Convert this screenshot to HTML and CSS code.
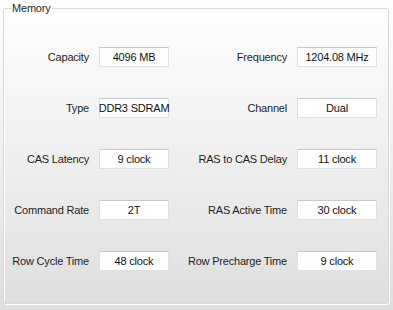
FILE: index.html
```html
<!DOCTYPE html>
<html>
<head>
  <meta charset="UTF-8">
  <title>Memory</title>
  <link rel="stylesheet" href="styles.css">
</head>
<body>
  <fieldset class="group">
    <legend class="group-title">Memory</legend>
    <div class="fields">
      <span class="label">Capacity</span>
      <span class="value">4096 MB</span>
      <span class="label">Frequency</span>
      <span class="value">1204.08 MHz</span>

      <span class="label">Type</span>
      <span class="value">DDR3 SDRAM</span>
      <span class="label">Channel</span>
      <span class="value">Dual</span>

      <span class="label">CAS Latency</span>
      <span class="value">9 clock</span>
      <span class="label">RAS to CAS Delay</span>
      <span class="value">11 clock</span>

      <span class="label">Command Rate</span>
      <span class="value">2T</span>
      <span class="label">RAS Active Time</span>
      <span class="value">30 clock</span>

      <span class="label">Row Cycle Time</span>
      <span class="value">48 clock</span>
      <span class="label">Row Precharge Time</span>
      <span class="value">9 clock</span>
    </div>
  </fieldset>
</body>
</html>
```

FILE: styles.css
```css
html {
  height: 100%;
}

body {
  margin: 0;
  padding: 0 4px 0 3px;
  height: 310px;
  box-sizing: border-box;
  background: linear-gradient(#ffffff 0%, #f4f4f4 35%, #dedede 100%);
  font-family: "Liberation Sans", Arial, sans-serif;
  font-size: 11px;
  letter-spacing: -0.2px;
  color: #1e1e1e;
}

.group {
  margin: 0;
  padding: 0;
  height: 304px;
  box-sizing: border-box;
  border: 1px solid #d3dadf;
  border-radius: 3px;
  box-shadow: 1px 1px 0 #ffffff, inset 1px 1px 0 #ffffff;
}

.group-title {
  margin-left: 7px;
  padding: 0 1px;
  line-height: 16px;
  color: #1e1e1e;
}

.fields {
  display: grid;
  grid-template-columns: 95px 70px 128px 80px;
  grid-auto-rows: 20px;
  row-gap: 31px;
  padding-top: 31px;
}

.label {
  display: flex;
  align-items: center;
  justify-content: flex-end;
  padding-right: 10px;
  white-space: nowrap;
}

.value {
  display: flex;
  align-items: center;
  justify-content: center;
  background: #ffffff;
  border: 1px solid #dde1e4;
  border-top-color: #c4cacf;
  color: #111111;
  white-space: nowrap;
}
```
